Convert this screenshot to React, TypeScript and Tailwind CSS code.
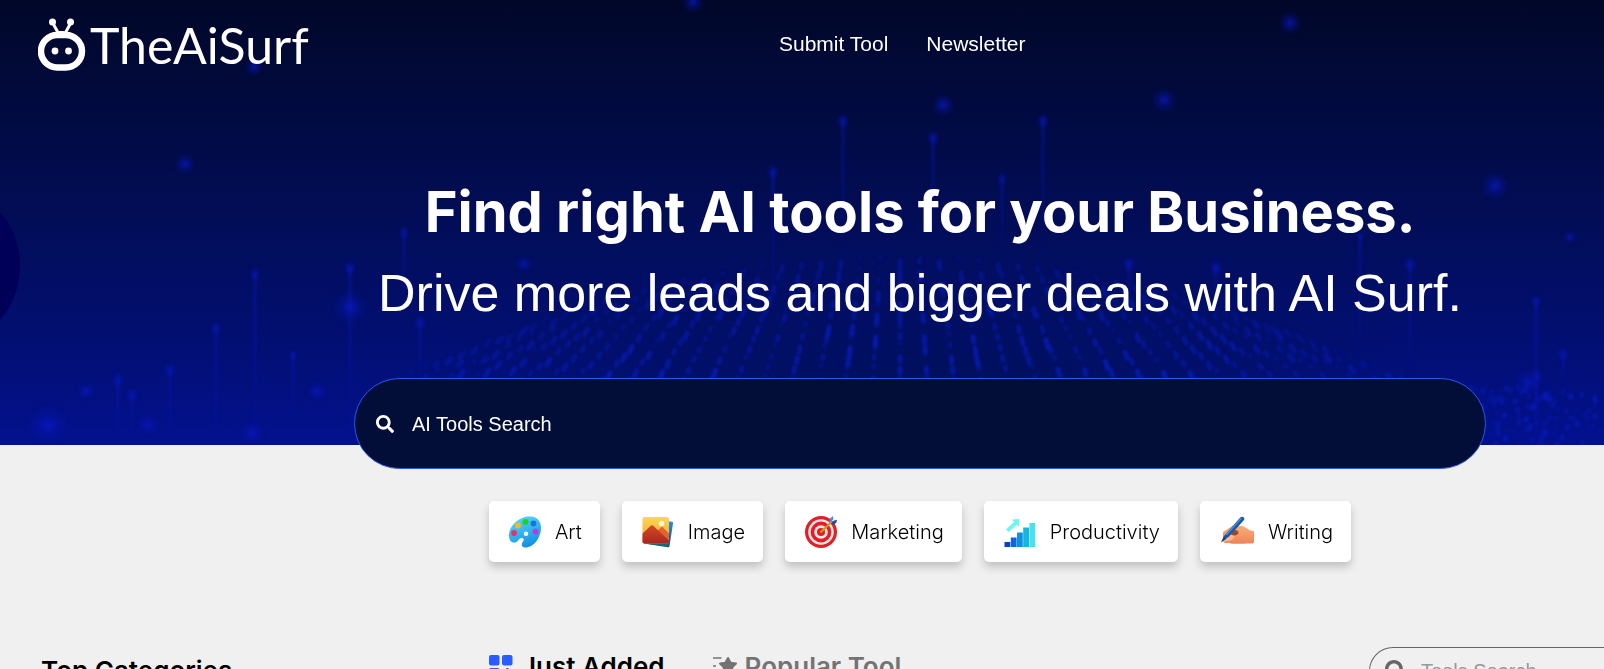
import { FaSearch } from "react-icons/fa";

const beams = [
  { x: 843, y: 121, h: 130, r: 5 },
  { x: 933, y: 138, h: 100, r: 5 },
  { x: 1043, y: 121, h: 130, r: 5 },
  { x: 773, y: 172, h: 130, r: 5 },
  { x: 1002, y: 179, h: 70, r: 3 },
  { x: 404, y: 233, h: 60, r: 4 },
  { x: 350, y: 268, h: 170, r: 5 },
  { x: 255, y: 274, h: 170, r: 4 },
  { x: 216, y: 329, h: 110, r: 4 },
  { x: 420, y: 322, h: 60, r: 5 },
  { x: 293, y: 355, h: 60, r: 3 },
  { x: 170, y: 370, h: 75, r: 5 },
  { x: 118, y: 380, h: 65, r: 5 },
  { x: 132, y: 395, h: 40, r: 5 },
  { x: 1129, y: 264, h: 40, r: 5 },
  { x: 1216, y: 268, h: 40, r: 6 },
  { x: 1410, y: 264, h: 110, r: 5 },
  { x: 1360, y: 236, h: 110, r: 2 },
  { x: 1536, y: 301, h: 140, r: 4 },
  { x: 1537, y: 376, h: 68, r: 4 },
  { x: 1563, y: 354, h: 30, r: 5 },
];

const orbs = [
  { x: 185, y: 164, r: 7 },
  { x: 693, y: 2, r: 8 },
  { x: 1290, y: 23, r: 8 },
  { x: 943, y: 105, r: 8 },
  { x: 1164, y: 100, r: 9 },
  { x: 1495, y: 186, r: 11 },
  { x: 350, y: 307, r: 14 },
  { x: 524, y: 264, r: 5 },
  { x: 254, y: 67, r: 6 },
  { x: 317, y: 391, r: 7 },
  { x: 48, y: 425, r: 18 },
  { x: 86, y: 391, r: 6 },
  { x: 252, y: 433, r: 9 },
  { x: 148, y: 425, r: 8 },
  { x: 1570, y: 237, r: 3 },
  { x: 1528, y: 382, r: 10 },
];

function noise(n: number) {
  const v = Math.sin(n * 127.1) * 43758.5453;
  return v - Math.floor(v);
}

const dome: { x: number; y: number; h: number; o: number; tilt: number }[] = [];
for (let i = 2; i <= 40; i++) {
  const t = (i - 21) / 21;
  const top = 254 + 82 * t * t;
  const rows = 13;
  for (let j = 0; j < rows; j++) {
    const k = j / (rows - 1);
    const n = noise(i * 31 + j * 7 + 3);
    const edge = 1 - 0.5 * t * t;
    dome.push({
      x: 900 + t * (410 + 170 * k),
      y: top + (384 - top) * k + n * 5,
      h: 5 + n * 7,
      o: (0.25 + 0.6 * n) * (0.5 + 0.5 * k) * edge,
      tilt: t * 46,
    });
  }
}
for (let i = 0; i < 140; i++) {
  const x = 1470 + noise(i + 500) * 134;
  dome.push({ x, y: 385 + noise(i + 900) * 60, h: 6, o: 0.5 * noise(i + 40), tilt: -25 });
}

function HeroBackdrop() {
  return (
    <svg
      aria-hidden="true"
      className="absolute inset-0 h-full w-full"
      viewBox="0 0 1604 445"
      preserveAspectRatio="xMidYMid slice"
    >
      <defs>
        <linearGradient id="sky" x1="0" y1="0" x2="0" y2="1">
          <stop offset="0" stopColor="#010728" />
          <stop offset="0.2" stopColor="#010a3c" />
          <stop offset="0.5" stopColor="#020d58" />
          <stop offset="0.75" stopColor="#020f70" />
          <stop offset="1" stopColor="#03118e" />
        </linearGradient>
        <radialGradient id="shade" cx="0.58" cy="0.9" r="0.32">
          <stop offset="0" stopColor="#010f54" stopOpacity="0.9" />
          <stop offset="1" stopColor="#010f54" stopOpacity="0" />
        </radialGradient>
        <linearGradient id="beam" x1="0" y1="0" x2="0" y2="1">
          <stop offset="0" stopColor="#0a16b8" stopOpacity="0.4" />
          <stop offset="1" stopColor="#0a16b8" stopOpacity="0.05" />
        </linearGradient>
        <radialGradient id="orb">
          <stop offset="0" stopColor="#0a18c8" stopOpacity="0.8" />
          <stop offset="0.5" stopColor="#0816b4" stopOpacity="0.3" />
          <stop offset="1" stopColor="#0614a8" stopOpacity="0" />
        </radialGradient>
        <filter id="soft" x="-5%" y="-5%" width="110%" height="110%" colorInterpolationFilters="sRGB">
          <feGaussianBlur stdDeviation="1.3" />
        </filter>
      </defs>
      <rect width="1604" height="445" fill="url(#sky)" />
      <rect width="1604" height="445" fill="url(#shade)" />
      <ellipse cx="-40" cy="266" rx="60" ry="72" fill="#000058" />
      <g filter="url(#soft)">
        {dome.map((d, i) => (
          <rect
            key={i}
            x={d.x - 2.5}
            y={d.y}
            width="5"
            height={d.h}
            rx="2"
            fill="#0a1ec8"
            opacity={d.o}
            transform={`rotate(${-d.tilt} ${d.x} ${d.y})`}
          />
        ))}
      </g>
      <g filter="url(#soft)">
        {beams.map((b, i) => (
          <g key={i}>
            <rect x={b.x - 2} y={b.y} width="4" height={b.h} fill="url(#beam)" />
            <ellipse cx={b.x} cy={b.y} rx={b.r + 2} ry={b.r + 4} fill="url(#orb)" />
          </g>
        ))}
        {orbs.map((o, i) => (
          <circle key={i} cx={o.x} cy={o.y} r={o.r + 4} fill="url(#orb)" />
        ))}
      </g>
    </svg>
  );
}

function BotLogo() {
  return (
    <svg aria-hidden="true" className="h-[54px] w-12" viewBox="0 0 48 54" fill="none">
      <path d="M14.5 4.500l6 11M33 4.500l-6 11" stroke="#fff" strokeWidth="3" />
      <circle cx="14.500" cy="4" r="3.500" fill="#fff" />
      <circle cx="32.500" cy="4" r="3.500" fill="#fff" />
      <path d="M19 15c1-2 2-2 4.500-2s3.500 0 4.500 2z" fill="#fff" />
      <rect x="3" y="17" width="41" height="32.500" rx="16.200" stroke="#fff" strokeWidth="6.500" />
      <circle cx="17" cy="33" r="3.400" fill="#fff" />
      <circle cx="30.500" cy="33" r="3.400" fill="#fff" />
    </svg>
  );
}

function ArtIcon() {
  return (
    <svg aria-hidden="true" className="size-8" viewBox="0 0 32 32">
      <defs>
        <linearGradient id="pal" x1="0" y1="0" x2="0.4" y2="1">
          <stop offset="0" stopColor="#5ce0fb" />
          <stop offset="1" stopColor="#1594e4" />
        </linearGradient>
      </defs>
      <path
        d="M22 .500C12-.500.500 8 0 19c0 5 2 8 6 7.500 3-.5 3.500-4 6.500-4.500 2 0 3 1.500 1.500 3.500-2 2.500-2 6 2.500 6C25 31.500 32 21 32 12 32 5 28 1 22 .500zM17 15.500a2.300 2.300 0 1 1 0 4.600 2.300 2.300 0 0 1 0-4.600z"
        fill="url(#pal)"
        fillRule="evenodd"
      />
      <circle cx="5" cy="17" r="2.900" fill="#ec2f5c" />
      <circle cx="9" cy="9.500" r="2.900" fill="#f9b81f" />
      <circle cx="16.500" cy="6" r="2.900" fill="#1fd02c" />
      <circle cx="24.500" cy="7.500" r="2.900" fill="#1774d8" />
      <circle cx="26.500" cy="15.500" r="2.900" fill="#b53be8" />
    </svg>
  );
}

function ImageIcon() {
  return (
    <svg aria-hidden="true" className="size-8" viewBox="0 0 32 32">
      <defs>
        <linearGradient id="sun" x1="0" y1="0" x2="0" y2="1">
          <stop offset="0" stopColor="#fcd94e" />
          <stop offset="1" stopColor="#f29a2e" />
        </linearGradient>
        <linearGradient id="hill" x1="0" y1="0" x2="0" y2="1">
          <stop offset="0" stopColor="#d44a25" />
          <stop offset="1" stopColor="#a9261f" />
        </linearGradient>
        <linearGradient id="back" x1="0" y1="0" x2="0" y2="1">
          <stop offset="0" stopColor="#2a8df0" />
          <stop offset="1" stopColor="#1b4d70" />
        </linearGradient>
      </defs>
      <path d="M24 5l6 .8c1 .1 1.200.8 1 1.700L27.500 30c-.2 1-1 1.400-1.800 1.200L2 27.500z" fill="url(#back)" />
      <path d="M1 24l26 2-.5 3.500c-.2.8-.8 1-1.500.9L2.500 27.500C1.500 27 1 26 1 24z" fill="#176a73" />
      <rect x="0.500" y="1" width="26.500" height="26.500" rx="2" fill="url(#sun)" />
      <path d="M11 19l9-8.500 7 7V25z" fill="#e2632c" />
      <path d="M.5 17.500l8-7.500c1-1 2-1 3 0L27 24.500v1c0 1.200-.8 2-2 2H2.500c-1.200 0-2-.8-2-2z" fill="url(#hill)" />
      <circle cx="19.500" cy="7.500" r="2.800" fill="#fff6dc" />
    </svg>
  );
}

function MarketingIcon() {
  return (
    <svg aria-hidden="true" className="size-8" viewBox="0 0 32 32">
      <circle cx="16" cy="16" r="16" fill="#e01f26" />
      <circle cx="16" cy="16" r="12.800" fill="#f0e6e6" />
      <circle cx="16" cy="16" r="10.400" fill="#e01f26" />
      <circle cx="16" cy="16" r="6.800" fill="#f0e6e6" />
      <circle cx="16" cy="16" r="4" fill="#e01f26" />
      <path d="M15.500 16.500L27 5.500" stroke="#d39a1c" strokeWidth="2" />
      <path d="M24.500 6l.5-3.500L28 0l.3 3.300L25.500 6z" fill="#2d96ee" />
      <path d="M26 7.500l3-3 3-.8-.7 3-3 2.300z" fill="#1c4d9e" />
    </svg>
  );
}

function ProductivityIcon() {
  return (
    <svg aria-hidden="true" className="size-8" viewBox="0 0 32 32">
      <rect x="0.500" y="26" width="5.800" height="5" fill="#0b41c4" />
      <rect x="6.800" y="21.500" width="5.800" height="9.500" fill="#1067dd" />
      <rect x="13" y="16.500" width="5.800" height="14.500" fill="#1390dc" />
      <rect x="19.200" y="11.500" width="5.800" height="19.500" fill="#11b6e3" />
      <rect x="25.400" y="7" width="5.800" height="24" fill="#4be0ee" />
      <path d="M2 13.500L10 6 8 3.500 15.500 3 15 10.500 12.800 8.800 5 16z" fill="#6ff5f6" />
    </svg>
  );
}

function WritingIcon() {
  return (
    <svg aria-hidden="true" className="h-8 w-[34px]" viewBox="0 0 34 32">
      <defs>
        <linearGradient id="skin" x1="0" y1="0" x2="0" y2="1">
          <stop offset="0" stopColor="#fbae79" />
          <stop offset="1" stopColor="#ee8458" />
        </linearGradient>
      </defs>
      <path
        d="M3 16L13 9.500l9 .5c3 .2 7 5 11 5 .7 0 1 .5 1 1V25.500c0 1.500-1 2-2.500 2-6 .2-10 .2-16 .2-3 .3-5 0-6.500-1-2.500.5-5 .3-5.500-.7C1 25 2 24 3 23.500z"
        fill="url(#skin)"
      />
      <path d="M12 15c3-2 6-1 6.500 1.500S14 20 11 19.500z" fill="#9c4a2c" />
      <path d="M3 22l4-4.500L15 20l-3 4-9 2z" fill="#ffb98a" />
      <path d="M4 20L20.500 1.200C22-.300 25.500 1.500 24 4L9 20.500 3 25z" fill="#1b56a8" />
      <path d="M5.500 18.500L20.800 2l1.200.5L7 19z" fill="#4a90d8" />
      <path d="M4 20L.8 26.500 6 23z" fill="#17457f" />
    </svg>
  );
}

const categories = [
  { label: "Art", Icon: ArtIcon },
  { label: "Image", Icon: ImageIcon },
  { label: "Marketing", Icon: MarketingIcon },
  { label: "Productivity", Icon: ProductivityIcon },
  { label: "Writing", Icon: WritingIcon },
];

function GridIcon() {
  return (
    <svg aria-hidden="true" className="size-6 text-[#2a5cff]" viewBox="0 0 24 24" fill="currentColor">
      <rect x="0" y="0" width="10.500" height="10.500" rx="2" />
      <rect x="13" y="0" width="10.500" height="10.500" rx="2" />
      <rect x="0" y="13" width="10.500" height="10.500" rx="2" />
      <path d="M17.200 13h2.400v4h4v2.400h-4v4h-2.400v-4h-4V17h4z" />
    </svg>
  );
}

function StarIcon() {
  return (
    <svg aria-hidden="true" className="size-6" viewBox="0 0 24 24" fill="currentColor" stroke="currentColor">
      <path
        d="M15 3l2.600 4.800 5.400.8-4 4 1 5.900-5-2.700-5 2.700 1-5.900-4-4 5.400-.8z"
        strokeWidth="2"
        strokeLinejoin="round"
      />
      <path d="M0 3h8.500M0 11h3M0 18h6" strokeWidth="1.500" />
    </svg>
  );
}

export default function App() {
  return (
    <div className="h-screen overflow-hidden bg-[#f0f0f0] font-['Liberation_Sans',Arial,sans-serif] text-black">
      <header className="relative h-[445px] text-white">
        <HeroBackdrop />
        <div className="relative flex h-[88px] items-center pl-[38px]">
          <a href="#home" className="flex w-[741px] items-center gap-1 pt-0.5">
            <BotLogo />
            <span className="font-['Lato',sans-serif] text-[50px] leading-[60px]">TheAiSurf</span>
          </a>
          <nav className="flex gap-[38px] text-[21px]">
            <a href="#submit">Submit Tool</a>
            <a href="#newsletter">Newsletter</a>
          </nav>
        </div>
        <div className="relative flex flex-col items-center pt-[84px] pl-[236px] text-center whitespace-nowrap">
          <h1 className="font-['Inter',sans-serif] text-[56px] leading-[80px] font-bold">
            Find right AI tools for your Business.
          </h1>
          <p className="text-[52px] leading-[82px]">Drive more leads and bigger deals with AI Surf.</p>
        </div>
      </header>

      <main>
        <div className="relative -mt-[67px] flex flex-col items-center pl-[236px]">
          <label className="flex h-[91px] w-full max-w-[1132px] items-center gap-[18px] rounded-full border border-[#2459f5] bg-[#020e38] px-[21px] text-xl text-white">
            <FaSearch aria-hidden="true" className="size-[18px]" />
            <input
              type="search"
              aria-label="AI Tools Search"
              placeholder="AI Tools Search"
              className="min-w-0 flex-1 bg-transparent outline-none placeholder:text-white"
            />
          </label>
          <div className="mt-8 flex gap-[22px]">
            {categories.map(({ label, Icon }) => (
              <button
                key={label}
                type="button"
                className="flex h-[61px] items-center gap-[14px] rounded-[5px] bg-white pr-[18px] pl-5 font-['Inter',sans-serif] text-xl font-light shadow-[0_5px_8px_rgba(0,0,0,0.2)]"
              >
                <Icon />
                {label}
              </button>
            ))}
          </div>
        </div>

        <div className="mt-[85px] flex items-start pl-[41px] font-['Inter',sans-serif] whitespace-nowrap">
          <h2 className="w-[448px] shrink-0 pt-1 text-[26px] leading-10 font-semibold">Top Categories</h2>
          <div className="flex flex-1 gap-12 pt-0.5 text-[26px] leading-9 font-semibold">
            <button type="button" className="flex items-center gap-2">
              <GridIcon />
              Just Added
            </button>
            <button type="button" className="flex items-center gap-2 text-[#737373]">
              <StarIcon />
              Popular Tool
            </button>
          </div>
          <label className="flex h-12 w-[235px] shrink-0 items-center gap-[14px] rounded-l-full border border-r-0 border-[#666] pl-[15px] font-['Liberation_Sans',Arial,sans-serif] text-xl text-[#666]">
            <FaSearch aria-hidden="true" className="size-[22px] shrink-0" />
            <input
              type="search"
              aria-label="Tools Search"
              placeholder="Tools Search"
              className="w-full min-w-0 bg-transparent outline-none placeholder:text-[#999]"
            />
          </label>
        </div>
      </main>
    </div>
  );
}
